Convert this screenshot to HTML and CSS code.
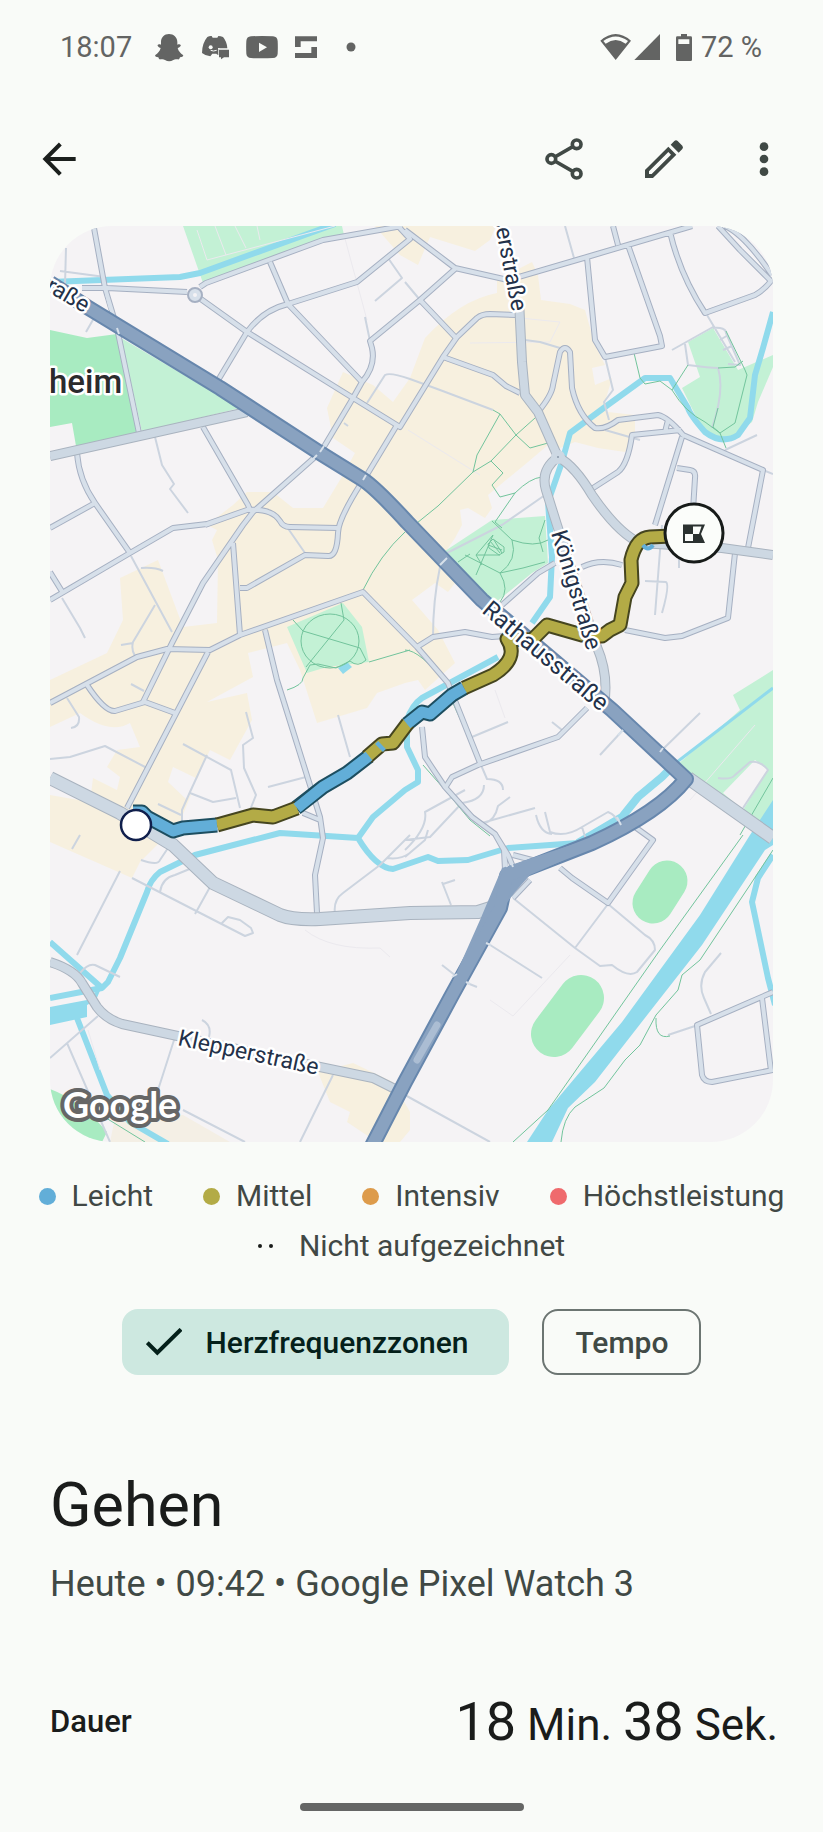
FILE: index.html
```html
<!DOCTYPE html>
<html lang="de">
<head>
<meta charset="utf-8">
<meta name="viewport" content="width=device-width, initial-scale=1">
<title>Gehen</title>
<link rel="stylesheet" href="styles.css">
</head>
<body>
<div class="screen">
  <header class="status">
    <div class="status-left">
      <span>18:07</span>
      <svg width="31" height="29" viewBox="462 99 93 87" aria-hidden="true"><path d="M507 102c-14 0-24 10-24 24v8c-4-1-8-2-10 1s3 7 9 9c-2 9-9 17-16 21-3 3 2 6 9 7 1 4 3 7 7 6 6-1 9-1 13 2 8 5 17 5 25 0 4-3 7-3 13-2 4 1 6-2 7-6 7-1 12-4 9-7-7-4-14-12-16-21 6-2 11-6 9-9s-6-2-10-1v-8c0-14-11-24-25-24z"/></svg>
      <svg width="29" height="25" viewBox="603 108 87 75" aria-hidden="true"><path d="M622 114q7-4 13-3l3 5h14l3-5q7 0 14 3 12 14 13 34h-27v20q-4-1-6-4h-12l-6 8q-14-1-25-10 0-29 16-48z"/><circle cx="632" cy="145" r="6" fill="#f9fbf8"/><path d="M632 154q8 4 18 0" stroke="#f9fbf8" stroke-width="3" fill="none"/><path d="M654 149h4v16" stroke="#f9fbf8" stroke-width="3" fill="none"/><path d="M657 152h30v23h-15l-9 6v-6h-6z"/></svg>
      <svg width="32" height="24" viewBox="735 105 96 72" aria-hidden="true"><path fill-rule="evenodd" d="M750 109q33-2 66 0 13 1 14 14 1 19 0 38-1 12-14 13-33 2-66 0-13-1-14-13-1-19 0-38 1-13 14-14zm24 19v28l24-14z"/></svg>
      <svg width="24" height="24" viewBox="885 105 72 72" aria-hidden="true"><path d="M888 109h66v15h-49v17h-17zM937 141h17v33h-66v-15h49z"/></svg>
      <svg class="more-dot" width="10" height="10" viewBox="0 0 10 10" aria-hidden="true"><circle cx="5" cy="5" r="4.5"/></svg>
    </div>
    <div class="status-right">
      <svg width="32" height="28" viewBox="567 99 96 84" aria-hidden="true"><path d="M614 180l-46-58q46-40 92 0zM577 123l7 8q30-22 60 0l7-8q-37-27-74 0z" fill-rule="evenodd"/></svg>
      <svg width="27" height="28" viewBox="669 99 81 84" aria-hidden="true"><path d="M670 180l77-78v78z"/></svg>
      <svg class="battery" width="18" height="29" viewBox="789 96 54 87" aria-hidden="true"><path fill-rule="evenodd" d="M807 99h18v7h11q4 0 4 4v66q0 4-4 4h-40q-4 0-4-4v-66q0-4 4-4h11zM799 115v14h33v-14z"/></svg>
      <span>72&nbsp;%</span>
    </div>
  </header>

  <nav class="appbar">
    <button class="icon-btn" type="button" aria-label="Zurück"><svg width="36" height="36" viewBox="123 423 108 108"><path d="M227 477h-90M181 432l-45 45 45 46" fill="none" stroke="#1b1f1d" stroke-width="12"/></svg></button>
    <div class="actions">
      <button class="icon-btn" type="button" aria-label="Teilen"><svg width="40" height="44" viewBox="402 411 120 132"><g fill="none" stroke="#404945" stroke-width="11"><path d="M424 477l76-44M424 477l76 44"/><g fill="#f9fbf8"><circle cx="424" cy="477" r="13"/><circle cx="500" cy="433" r="13"/><circle cx="500" cy="521" r="13"/></g></g></svg></button>
      <button class="icon-btn" type="button" aria-label="Bearbeiten"><svg width="40" height="40" viewBox="702 417 120 120"><path fill="#404945" fill-rule="evenodd" d="M705 510l70-70 24 24-70 70h-24zm12 12h8l58-58-8-8-58 58zM782 434l11-11q5-4 10 0l14 14q4 5 0 10l-11 11z"/></svg></button>
      <button class="icon-btn" type="button" aria-label="Mehr"><svg width="12" height="36" viewBox="1044 423 36 108"><g fill="#404945"><circle cx="1062" cy="440" r="13"/><circle cx="1062" cy="477" r="13"/><circle cx="1062" cy="515" r="13"/></g></svg></button>
    </div>
  </nav>

  <main>
    <div class="map">
      <svg class="map-canvas" viewBox="50 226 723 916" role="img" aria-label="Karte mit der Route">
        <defs>
          <g id="minor">
            <path d="M94 228L105 288L117 328L139 433M82 288L107 288L187 292M200 287L206 283L323 240L402 226M198 297L247 332L353 398L400 427L443 357L457 337L477 318Q482 314 490 314L517 315M217 382L247 332Q263 310 288 304L357 282L410 239L398 226M270 262L288 304L362 382M322 450L353 398L362 382Q376 366 372 348L370 341L420 300L455 269M405 230L455 268L508 280L587 257L692 226M420 300L456 338M443 357L493 375L506 386L520 393M587 257L595 340L605 357L662 346L660 336L628 245M613 226L618 245M670 232Q680 275 705 313L755 295Q764 290 771 281L740 250L718 226M725 226Q745 235 772 275"/>
            <path d="M538 412Q552 395 553 385L560 352Q565 344 570 352L572 388Q578 415 595 428Q605 430 618 420L658 415Q668 417 683 435L763 470L748 548M590 490L618 472Q628 464 632 435L681 430M665 432L668 420M682 437L655 525M677 468L690 470Q696 471 695 478L693 510M203 427L248 505L250 510M315 457L253 512L243 525L203 583L172 643L143 702M205 525L247 510Q272 508 280 521Q283 527 290 527L338 528M360 485Q338 520 338 533Q337 557 328 556L305 555L247 588L240 588M397 425L365 478M77 453Q79 480 95 503L130 553M95 503L50 528M50 600L130 553L173 528L207 524L247 510M50 572L63 593M233 543L240 635"/>
            <path d="M50 703L137 657L167 649L210 650L240 635L363 592L417 647L448 683L480 763M417 647L433 637L465 632L492 637L505 636M87 685Q105 712 115 711L145 702L175 713M208 652L127 808M265 630L277 680L320 817L323 838L315 875L317 913M303 813L320 820M502 605L538 573L555 563M582 567Q600 558 622 565M625 630L665 638L682 636L728 618L735 553M587 708L558 737L478 765L452 777L445 788M422 727L425 757L445 787L472 817L495 834L508 855L515 872M495 834L504 850L505 870M635 827L653 840L608 903L572 878L560 868M513 855L532 860M513 898L530 880M773 992L697 1025L702 1075Q704 1082 712 1082L773 1070M762 998L771 1071"/>
          </g>
          <path id="mediumA" d="M519 300L522 362L525 395L538 412L558 457M558 457Q540 470 546 490L557 525L597 647Q609 675 604 705M558 457Q575 466 592 495Q618 533 640 543L722 548L773 555M50 456L247 412M50 962Q75 970 82 983L97 1007Q106 1019 122 1024L173 1035L320 1067L373 1078L397 1090"/>
          <path id="mediumB" d="M50 778L120 813L173 845L213 883L280 915Q292 920 320 919L410 913L478 912L500 905M688 778L773 838"/>
          <path id="highwayPath" d="M50 283L87 307L220 388L320 453L362 479Q375 487 407 522L482 600L612 710L686 779Q660 812 592 843L515 873L507 876L500 908L452 995L405 1082L372 1146"/>
        </defs>
        <rect x="50" y="226" width="723" height="916" fill="#f5f3f5"/>
        <g fill="#f7f0df">
          <path d="M380 232L375 226H496L490 240L475 251L430 237L418 265L400 255z"/>
          <path d="M497 280L532 262L538 275L541 300L570 304L585 310L595 345L605 365L592 368L595 385L612 378L605 402L608 412L635 415V435L625 452L598 448L575 442L560 448L548 445L528 462L488 495L492 508L485 518L468 508L460 510L462 525L455 538L442 557L455 583L448 592L435 583L412 600L438 630L455 663L425 690L418 680L405 683L377 693L367 708L317 723L300 670L287 643L248 653L253 677L207 702L247 693L252 720L230 760L210 750L187 798L170 780L173 767L207 755L180 822L140 862L132 878L50 842V795L90 802L93 778L117 790L120 777L107 767L117 750L140 747L130 723Q110 735 80 713L50 727V680L107 653L123 620L120 578L158 560L183 627L217 623L218 560L212 540L217 530L207 525L233 505L247 492L273 492L293 508H323L343 475L355 453L333 438L327 408L343 372L373 385L393 402L410 378L425 338Q460 300 497 293z"/>
          <path d="M318 1072L353 1063L393 1082L410 1112V1130L400 1142H377L347 1122L350 1112L330 1102z"/>
          <path d="M183 1115L230 1142H110L115 1118z" fill="#f4efe5"/>
        </g>
        <path d="M173 767L200 780L187 800L168 782z" fill="#f5f3f5"/>
        <g fill="#c3f1d5">
          <path d="M183 226H342L344 235L270 260L203 283zM121 338L240 408L142 432zM688 342L713 328L738 370L773 355V367L758 402L752 422L732 438L705 435L682 388L700 377zM442 553L492 520L545 516L548 563L532 573L495 603L483 597zM287 627L343 603L362 627L369 662L327 667L307 673zM773 670L733 695L740 710L677 765L692 775L758 828L773 810z"/>
        </g>
        <g fill="#a8ebc1">
          <path d="M50 330L87 338L117 334L140 432L76 446L72 423L50 427zM50 1089Q80 1100 107 1132L102 1142H50z"/>
          <path d="M667 881L653 903" stroke="#a8ebc1" stroke-width="41" stroke-linecap="round"/>
          <path d="M581 998L554 1034" stroke="#a8ebc1" stroke-width="46" stroke-linecap="round"/>
        </g>
        <path d="M755 760L768 770L743 810L723 793z" fill="#f5f3f5"/>
        <g fill="none" stroke="#90daec" stroke-width="6" stroke-linejoin="round">
          <path d="M50 282L180 277L200 273L335 224M773 312L763 348L755 375L750 418L738 435Q722 445 705 432Q690 415 688 408L670 378H645L605 407L570 433L562 462L548 502L552 557L550 597L532 623M498 657L422 698Q412 705 407 720V747L418 770V782L405 790L373 817L358 838L280 833L195 855L160 872Q150 880 147 892L120 958L108 982L102 988L50 998M50 942L102 988M358 838Q376 868 393 869L428 857L438 861L468 860L508 848L578 843M773 855L758 878L752 902L768 978L775 1005M77 1018L107 1095L130 1122L168 1144"/>
          <path d="M578 843L622 817L638 797L662 777L677 762" stroke-width="8"/>
          <path d="M677 762L773 688" stroke-width="3"/>
        </g>
        <path d="M750 835L773 800V845L765 850L702 945L655 1005L595 1082L568 1108L552 1142H527L548 1110L622 1022L700 915zM50 1007L87 1000L102 986L96 1000L87 1005V1017L50 1025zM338 668L347 662L352 667L343 674z" fill="#90daec"/>
        <g fill="none" stroke="#ebe9ee" stroke-width="1">
          <path d="M197 230L207 260L335 226M215 226L226 255M235 226L246 248M257 226L260 240M344 235L367 320M408 430L480 475M470 343L550 342L560 322L520 318M495 690L505 718M305 930Q330 950 380 948L390 957M490 1000L513 1016L570 955M88 1030L100 1070M690 800L755 725"/>
        </g>
        <g class="streets">
          <path d="M66 248L65 285M60 271L105 277M94 318L86 332M388 258L402 278L375 301M365 317L370 341M367 403L385 375Q390 372 410 379L440 390L493 410M344 423L348 426M155 437L162 465L174 484L170 489L188 513M131 556L172 632M141 568Q155 567 163 571M155 605L133 642Q131 650 135 656M133 643L121 645M62 598L80 628L85 638M131 684L144 691M67 698L79 717Q80 727 71 728M50 759L70 757L105 746L147 768M287 527L305 553M246 712L253 738L243 745L244 768L256 795L250 810M183 744L231 770L240 808M207 755L190 792L182 810V821M190 793L213 802L236 798M158 804L181 815M268 787L306 777M338 715L350 757"/>
          <path d="M565 226L574 258M405 282L420 300M525 340L540 342L560 348M605 357L613 390L604 402L609 420M605 430L640 440M672 350L713 327M685 344L688 365Q710 368 718 368Q725 390 712 428M707 315L735 362M713 328Q726 327 726 333L740 365L728 364M720 340L728 335M723 350L732 346M545 495L502 525L443 555M440 567Q433 600 433 637M662 525L655 615M645 581L666 582Q670 585 662 613M679 553V568M763 470L773 474M725 450L757 435M472 737L508 722M552 722L562 730M600 755L623 730M660 752L700 713M481 765L487 779Q503 779 503 790M484 785Q484 800 462 803L430 837L405 840M465 790L425 812Q428 828 405 850M510 797L498 806Q495 820 485 823M482 823L535 808M536 815Q540 833 552 834M545 812L550 832Q565 838 582 827L608 812Q616 815 620 825M582 827L587 843M718 778Q731 780 735 775L750 762Q760 760 768 770L743 808"/>
          <path d="M120 871L77 955M80 973Q88 963 95 965L120 977M80 835L72 849M141 860Q158 866 160 860L168 848M132 878L245 936L253 933L251 928L240 920L228 917L221 924M160 892Q162 878 175 875L192 868M210 887L195 914M335 914Q333 900 343 893L380 865L410 835M387 858Q400 860 410 853M202 1020Q212 1025 209 1037M98 1016L50 1058M67 1043L110 1142M175 1037L158 1090M333 1075L300 1142M183 1110L245 1142M405 1095L490 1142M405 857L425 840L428 830M513 898L575 948L600 966L612 965Q628 978 637 972L655 950Q655 940 645 935L608 904M608 904L575 948M487 943L542 978M442 965L456 976M467 983L477 987M442 882L451 905M443 884L455 880M721 953L705 972Q698 985 704 998L711 1014M695 1026L668 1035"/>
        </g>
        <g class="paths">
          <path d="M634 353L640 378L645 384L660 381L672 390L688 365M672 390Q685 412 705 422L720 433L726 448M726 331L745 370L747 375L735 423L720 433L713 427L718 408M718 368L735 367L743 361M493 410L500 414L477 455L473 472M500 414L516 435L530 448L548 443M535 418L516 435L491 461L473 472L438 506L417 523M491 461L503 473L492 485L500 497L515 493Q530 478 542 477M515 493L495 522L502 528"/>
          <path d="M405 532Q380 555 363 590M341 603L344 620L306 667M369 662L410 650M287 690Q303 685 303 678L310 665L318 664L336 668L350 661Q358 668 366 660L360 648L303 631L293 620"/>
          <ellipse cx="330" cy="641" rx="29" ry="27"/>
          <path d="M492 521L512 540Q535 548 548 540M545 520L539 538L543 552M512 540Q518 560 500 573L465 555M500 573Q510 590 500 602M500 573L523 568L545 562M458 562L470 554M493 535L476 555H500M493 535L476 575M476 555L482 565"/>
          <path d="M488 544l5-5 11 8v5l-5 3-10-7zM490 541l10 12M494 540l8 13M488 545l14 5"/>
          <path d="M405 650Q420 650 447 685M447 690L480 763M423 765L445 790L470 820L490 836M740 835L773 778M743 835L660 950L548 1110L513 1142M773 850L750 885L700 960L682 975L678 990L656 1015L640 1045L625 1060L604 1088L575 1107Q563 1118 561 1142M656 1018Q655 1040 670 1036M85 1105L145 1142"/>
        </g>
        <use href="#minor" class="minor-case"/>
        <use href="#minor" class="minor-fill"/>
        <circle cx="195" cy="295" r="5" class="ring-case"/>
        <circle cx="195" cy="295" r="4" class="ring"/>
        <use href="#mediumA" class="med-case"/>
        <use href="#mediumA" class="med-fill"/>
        <circle cx="558" cy="457" r="7" fill="#cdd8e3"/><circle cx="558" cy="457" r="1" fill="#8a98a8"/>
        <use href="#mediumB" class="big-case"/>
        <use href="#mediumB" class="big-fill"/>
        <use href="#highwayPath" class="hw-case"/>
        <path d="M502 868L592 838L600 844L530 875L515 892L500 912L480 955L462 985L448 992L480 920z" fill="#89a2c0"/>
        <use href="#highwayPath" class="hw-fill"/>
        <path d="M437 1025L417 1060" stroke="#abbdd3" stroke-width="7" stroke-linecap="round"/>
        <path d="M106 294L110 310M117 328L119 334M440 565L447 558M618 735L623 730M660 752L663 748M320 452L324 446M311 461L317 455M363 480L366 475M504 850L507 867M509 857L513 867M617 817L621 825M486 943L491 945M452 977L457 974M466 982L470 984" class="crossings"/>

        <g fill="none" stroke-linejoin="round">
          <path d="M133 812H142L147 817L173 831L183 828L217 825" class="case-blue"/>
          <path d="M296 808L323 787L347 773L369 756" class="case-blue"/>
          <path d="M407 724L422 712L430 714L452 695L464 688" class="case-blue"/>
          <path d="M217 825L253 815L273 817L297 808M367 757L382 744L393 743L408 723M464 688L493 675Q520 658 507 639L532 640L542 630L547 625L582 635L602 636L610 630L620 625L625 597L632 583L631 560Q636 538 650 537L693 535" class="case-olive"/>
          <path d="M217 825L253 815L273 817L297 808M367 757L382 744L393 743L408 723M464 688L493 675Q520 658 507 639L532 640L542 630L547 625L582 635L602 636L610 630L620 625L625 597L632 583L631 560Q636 538 650 537L693 535" class="line-olive"/>
          <path d="M133 812H142L147 817L173 831L183 828L217 825M297 808L323 787L347 773L369 756M379 748L382 745M407 724L422 712L430 714L452 695L464 688" class="line-blue"/>
          <path d="M643 545Q648 552 653 545" stroke="#62aed8" stroke-width="4"/>
        </g>
        <circle cx="136" cy="825" r="15" fill="#fff" stroke="#101f4c" stroke-width="2.5"/>
        <circle cx="694" cy="533" r="29" fill="#fbfdfa" stroke="#171b19" stroke-width="3"/>
        <path fill="#2b3230" fill-rule="evenodd" d="M683 524.500H705L701 534L705 543H683zM685 534V541H693V534zM693 526.500V534H699L701.500 526.500z"/>

        <g class="labels">
          <text transform="translate(84 313) rotate(30)" text-anchor="end">raße</text>
          <text transform="translate(512 312) rotate(79)" text-anchor="end">serstraße</text>
          <text transform="translate(551 533) rotate(73)">Königstraße</text>
          <text transform="translate(481 612) rotate(40)" class="major">Rathausstraße</text>
          <text transform="translate(177 1045) rotate(12)">Klepperstraße</text>
          <text x="49" y="393" class="town">heim</text>
        </g>
        <text x="63" y="1118" class="google">Google</text>
      </svg>
    </div>

    <ul class="legend">
      <li><span class="dot leicht"></span>Leicht</li>
      <li><span class="dot mittel"></span>Mittel</li>
      <li><span class="dot intensiv"></span>Intensiv</li>
      <li><span class="dot hoechst"></span>Höchstleistung</li>
      <li class="missing"><span class="pair"><i></i><i></i></span>Nicht aufgezeichnet</li>
    </ul>

    <div class="chips">
      <button class="chip selected" type="button" aria-pressed="true"><svg width="36" height="28" viewBox="437 506 108 84" aria-hidden="true"><path d="M441 550l30 30 71-70" fill="none" stroke="#04201a" stroke-width="12"/></svg>Herzfrequenzzonen</button>
      <button class="chip" type="button" aria-pressed="false">Tempo</button>
    </div>

    <section class="summary">
      <h1>Gehen</h1>
      <p class="meta">Heute • 09:42 • Google Pixel Watch 3</p>
      <dl class="stat">
        <dt>Dauer</dt>
        <dd><span class="num">18</span> Min. <span class="num">38</span> Sek.</dd>
      </dl>
    </section>
  </main>
  <div class="handle"></div>
</div>
</body>
</html>
```
FILE: styles.css
```css
* { box-sizing: border-box; }
body {
  margin: 0;
  background: #f9fbf8;
  color: #1a1c1b;
  font-family: Roboto, "Noto Sans", sans-serif;
}
svg { display: block; flex: none; }
button { font: inherit; color: inherit; background: none; border: 0; padding: 0; }
.screen { min-height: 100vh; display: flex; flex-direction: column; }

.status {
  display: flex;
  justify-content: space-between;
  align-items: center;
  height: 94px;
  padding: 0 61px 0 60px;
  font-size: 29px;
  color: #636463;
  fill: #636463;
}
.status-left { display: flex; align-items: center; gap: 16px; }
.status-left span { margin-right: 6px; }
.more-dot { margin-left: 12px; }
.status-right { display: flex; align-items: center; gap: 2px; }
.battery { margin: 0 6px 0 12px; }

.appbar {
  display: flex;
  justify-content: space-between;
  align-items: center;
  height: 132px;
  padding: 0 39px 2px;
}
.actions { display: flex; gap: 60px; }
.icon-btn {
  width: 40px;
  height: 48px;
  display: flex;
  align-items: center;
  justify-content: center;
}

.map { margin: 0 50px; border-radius: 62px; overflow: hidden; }
.map-canvas { width: 100%; height: auto; }
.map-canvas use, .streets, .paths, .crossings { fill: none; stroke-linejoin: round; }
.streets { stroke: #ccd4df; stroke-width: 2; }
.paths { stroke: #72c49c; stroke-width: 1; }
.minor-case { stroke: #a6b0c2; stroke-width: 6; }
.minor-fill { stroke: #d7e0ea; stroke-width: 4; }
.med-case { stroke: #a9b3bf; stroke-width: 10; }
.med-fill { stroke: #cdd8e3; stroke-width: 8; }
.big-case { stroke: #a9b3bf; stroke-width: 14; }
.big-fill { stroke: #cdd8e3; stroke-width: 12; }
.hw-case { stroke: #6787ad; stroke-width: 16; }
.hw-fill { stroke: #89a2c0; stroke-width: 12; }
.crossings { stroke: #d7e0ea; stroke-width: 2; }
.ring-case { fill: none; stroke: #a6b0c2; stroke-width: 6; }
.ring { fill: #f5f3f5; stroke: #d7e0ea; stroke-width: 4; }
.case-blue { stroke: #1d4e60; stroke-width: 15; }
.case-olive { stroke: #45451f; stroke-width: 15; }
.line-blue { stroke: #62aed8; stroke-width: 11; }
.line-olive { stroke: #b3ab46; stroke-width: 11; }
.labels text {
  font-size: 23px;
  fill: #233149;
  stroke: #fff;
  stroke-width: 5px;
  stroke-linejoin: round;
  paint-order: stroke;
}
.labels .major { font-size: 24px; }
.labels .town { font-size: 33px; font-weight: 500; fill: #2b2b2d; }
.google {
  font-family: Lato, sans-serif;
  font-size: 36px;
  font-weight: 700;
  fill: #fff;
  stroke: #666;
  stroke-width: 8px;
  stroke-linejoin: round;
  paint-order: stroke;
}

.legend {
  list-style: none;
  margin: 0;
  padding: 29px 20px 0;
  display: flex;
  flex-wrap: wrap;
  justify-content: center;
  column-gap: 50px;
  font-size: 30px;
  line-height: 50px;
  color: #414845;
}
.legend li { display: flex; align-items: center; gap: 16px; }
.legend .missing { gap: 26px; }
.dot { width: 17px; height: 17px; border-radius: 50%; }
.leicht { background: #62aed8; }
.mittel { background: #b3ab46; }
.intensiv { background: #dd9b4b; }
.hoechst { background: #ef6a6d; }
.pair { display: flex; gap: 7px; }
.pair i { width: 4px; height: 4px; border-radius: 50%; background: #1a1c1b; }

.chips { display: flex; justify-content: center; gap: 33px; margin-top: 38px; }
.chip {
  height: 66px;
  display: flex;
  align-items: center;
  gap: 22px;
  padding: 0 31px;
  border: 2px solid #6c7572;
  border-radius: 16px;
  font-size: 30px;
  font-weight: 500;
  color: #404945;
}
.chip.selected {
  padding: 0 39px 0 22px;
  gap: 24px;
  background: #cde8e0;
  border-color: #cde8e0;
  color: #04201a;
}

.summary { padding: 94px 45px 0 50px; }
h1 { margin: 0; font-size: 61px; line-height: 72px; font-weight: 400; }
.meta { margin: 21px 0 0; font-size: 36px; line-height: 44px; color: #404945; }
.stat {
  margin: 80px 0 0;
  display: flex;
  justify-content: space-between;
  align-items: flex-start;
}
.stat dt { padding-top: 16px; font-size: 31px; font-weight: 500; line-height: 40px; }
.stat dd { margin: 0; font-size: 44px; line-height: 72px; }
.num { font-size: 54px; }
.handle {
  width: 224px;
  height: 8px;
  margin: auto auto 21px;
  border-radius: 4px;
  background: #656665;
}
```
